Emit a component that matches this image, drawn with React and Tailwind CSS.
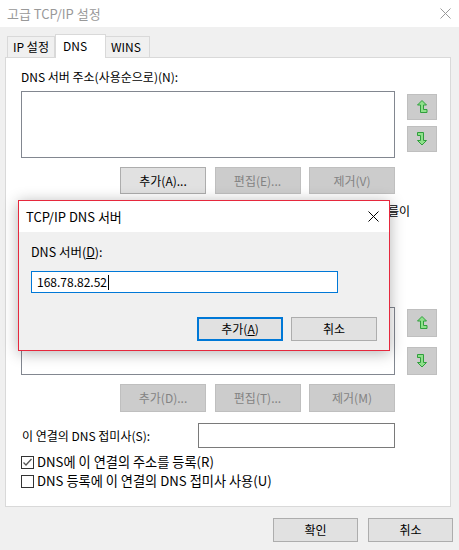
const font = "font-['Noto_Sans_CJK_KR','Noto_Sans',sans-serif]";

function UpIcon() {
  return (
    <svg width="11" height="14" viewBox="0 0 11 14">
      <path d="M5 0.5 L9.5 5 L6.5 5 L6.5 9.5 L10 9.5 L10 12.5 L3.5 12.5 L3.5 5 L0.5 5 Z" fill="#8ee08a" stroke="#2f9e3c" strokeWidth="1" strokeLinejoin="miter" />
    </svg>
  );
}

function DownIcon() {
  return (
    <svg width="11" height="14" viewBox="0 0 11 14">
      <path d="M0.5 0.5 L6.5 0.5 L6.5 8.5 L9.5 8.5 L5 13 L0.5 8.5 L3.5 8.5 L3.5 3.5 L0.5 3.5 Z" fill="#8ee08a" stroke="#2f9e3c" strokeWidth="1" strokeLinejoin="miter" />
    </svg>
  );
}

function ArrowButton({ down, h }) {
  return (
    <div className={`w-[30px] ${h} bg-[#cccccc] border border-[#bfbfbf] flex items-center justify-center`}>
      {down ? <DownIcon /> : <UpIcon />}
    </div>
  );
}

function Btn({ children, disabled, focused, w = 'w-[86px]', h = 'h-[27px]' }) {
  let cls = 'bg-[#e1e1e1] border border-[#adadad] text-black';
  if (disabled) cls = 'bg-[#cccccc] border border-[#bfbfbf] text-[#838383]';
  if (focused) cls = 'bg-[#e1e1e1] border-2 border-[#0078d7] text-black';
  return (
    <div className={`${w} ${h} ${cls} flex items-center justify-center text-[12px] leading-none`}>
      {children}
    </div>
  );
}

function Check({ checked }) {
  return (
    <div className="w-[13px] h-[13px] border border-[#333333] bg-white flex items-center justify-center">
      {checked && (
        <svg width="11" height="11" viewBox="0 0 11 11">
          <path d="M1.5 5.5 L4 8 L9.5 2" fill="none" stroke="#555555" strokeWidth="1.3" />
        </svg>
      )}
    </div>
  );
}

export default function App() {
  return (
    <div className={`relative w-[459px] h-[550px] bg-[#f0f0f0] overflow-hidden text-[12px] text-black ${font}`}>
      {/* title bar */}
      <div className="h-[27px] bg-white flex items-center justify-between pl-[7px] pr-[8px]">
        <span className="text-[#999999] text-[13px]">고급 TCP/IP 설정</span>
        <svg width="11" height="11" viewBox="0 0 11 11">
          <path d="M0.5 0.5 L10.5 10.5 M10.5 0.5 L0.5 10.5" stroke="#999999" strokeWidth="1" />
        </svg>
      </div>

      {/* tabs */}
      <div className="h-[30px] flex items-end pl-[7px] relative z-10">
        <div className="h-[21px] w-[48px] border border-[#d9d9d9] border-b-0 bg-[#f0f0f0] flex items-center justify-center">IP 설정</div>
        <div className="h-[24px] w-[51px] border border-[#d9d9d9] border-b-0 bg-white -mb-px flex items-start pt-[2px] pl-[7px]">DNS</div>
        <div className="h-[21px] w-[44px] border border-[#d9d9d9] border-b-0 border-l-0 bg-[#f0f0f0] flex items-center justify-center pr-[3px]">WINS</div>
      </div>

      {/* panel */}
      <div className="ml-[5px] w-[446px] h-[450px] bg-white border border-[#d9d9d9] pl-[15px] pt-[11px]">
        <div className="leading-[16px]">DNS 서버 주소(사용순으로)(N):</div>
        <div className="mt-[6px] flex gap-[12px]">
          <div className="w-[374px] h-[67px] border border-[#828790] bg-white" />
          <div className="flex flex-col gap-[6px] pt-[3px]">
            <ArrowButton h="h-[26px]" />
            <ArrowButton h="h-[26px]" down />
          </div>
        </div>
        <div className="mt-[9px] ml-[99px] flex gap-[8.5px]">
          <Btn>추가(A)...</Btn>
          <Btn disabled>편집(E)...</Btn>
          <Btn disabled>제거(V)</Btn>
        </div>
        <div className="mt-[9px] ml-[367px] leading-[16px] whitespace-nowrap">를이</div>

        <div className="mt-[88px] flex gap-[12px]">
          <div className="w-[374px] h-[68px] border border-[#828790] bg-white" />
          <div className="flex flex-col gap-[10px] pt-[2px]">
            <ArrowButton h="h-[28px]" />
            <ArrowButton h="h-[28px]" down />
          </div>
        </div>
        <div className="mt-[9px] ml-[99px] flex gap-[8.5px]">
          <Btn disabled h="h-[28px]">추가(D)...</Btn>
          <Btn disabled h="h-[28px]">편집(T)...</Btn>
          <Btn disabled h="h-[28px]">제거(M)</Btn>
        </div>

        <div className="mt-[11px] flex items-center">
          <span className="w-[177px] pl-[1px]">이 연결의 DNS 접미사(S):</span>
          <div className="w-[197px] h-[25px] border border-[#7a7a7a] bg-white" />
        </div>
        <div className="mt-[6px] flex items-center gap-[3px] leading-[16px] text-[13.2px]">
          <Check checked />
          <span>DNS에 이 연결의 주소를 등록(R)</span>
        </div>
        <div className="mt-[3px] flex items-center gap-[3px] leading-[16px] text-[13.2px]">
          <Check />
          <span>DNS 등록에 이 연결의 DNS 접미사 사용(U)</span>
        </div>
      </div>

      {/* footer buttons */}
      <div className="mt-[11px] flex justify-end gap-[10px] pr-[6px]">
        <Btn w="w-[85px]" h="h-[24px]">확인</Btn>
        <Btn w="w-[85px]" h="h-[24px]">취소</Btn>
      </div>

      {/* overlay dialog */}
      <div className="absolute left-[18px] top-[200px] w-[372px] h-[151px] border border-[#e6283d] bg-[#f0f0f0] shadow-[0_2px_14px_rgba(0,0,0,0.3)] z-20">
        <div className="h-[31px] bg-white flex items-center justify-between pl-[7px] pr-[10px]">
          <span className="text-[13px]">TCP/IP DNS 서버</span>
          <svg width="11" height="11" viewBox="0 0 11 11">
            <path d="M0.5 0.5 L10.5 10.5 M10.5 0.5 L0.5 10.5" stroke="#000000" strokeWidth="1" />
          </svg>
        </div>
        <div className="pl-[12px] pt-[12px]">
          <div className="leading-[16px] text-[12.5px]">DNS 서버(<span className="underline">D</span>):</div>
          <div className="mt-[11px] w-[307px] h-[22px] border border-[#0078d7] bg-white flex items-center pl-[5px]">
            <span>168.78.82.52</span>
            <span className="w-px h-[15px] bg-black ml-px" />
          </div>
          <div className="mt-[24px] ml-[166px] flex gap-[8px]">
            <Btn focused h="h-[24px]">추가(<span className="underline">A</span>)</Btn>
            <Btn h="h-[24px]">취소</Btn>
          </div>
        </div>
      </div>
    </div>
  );
}
